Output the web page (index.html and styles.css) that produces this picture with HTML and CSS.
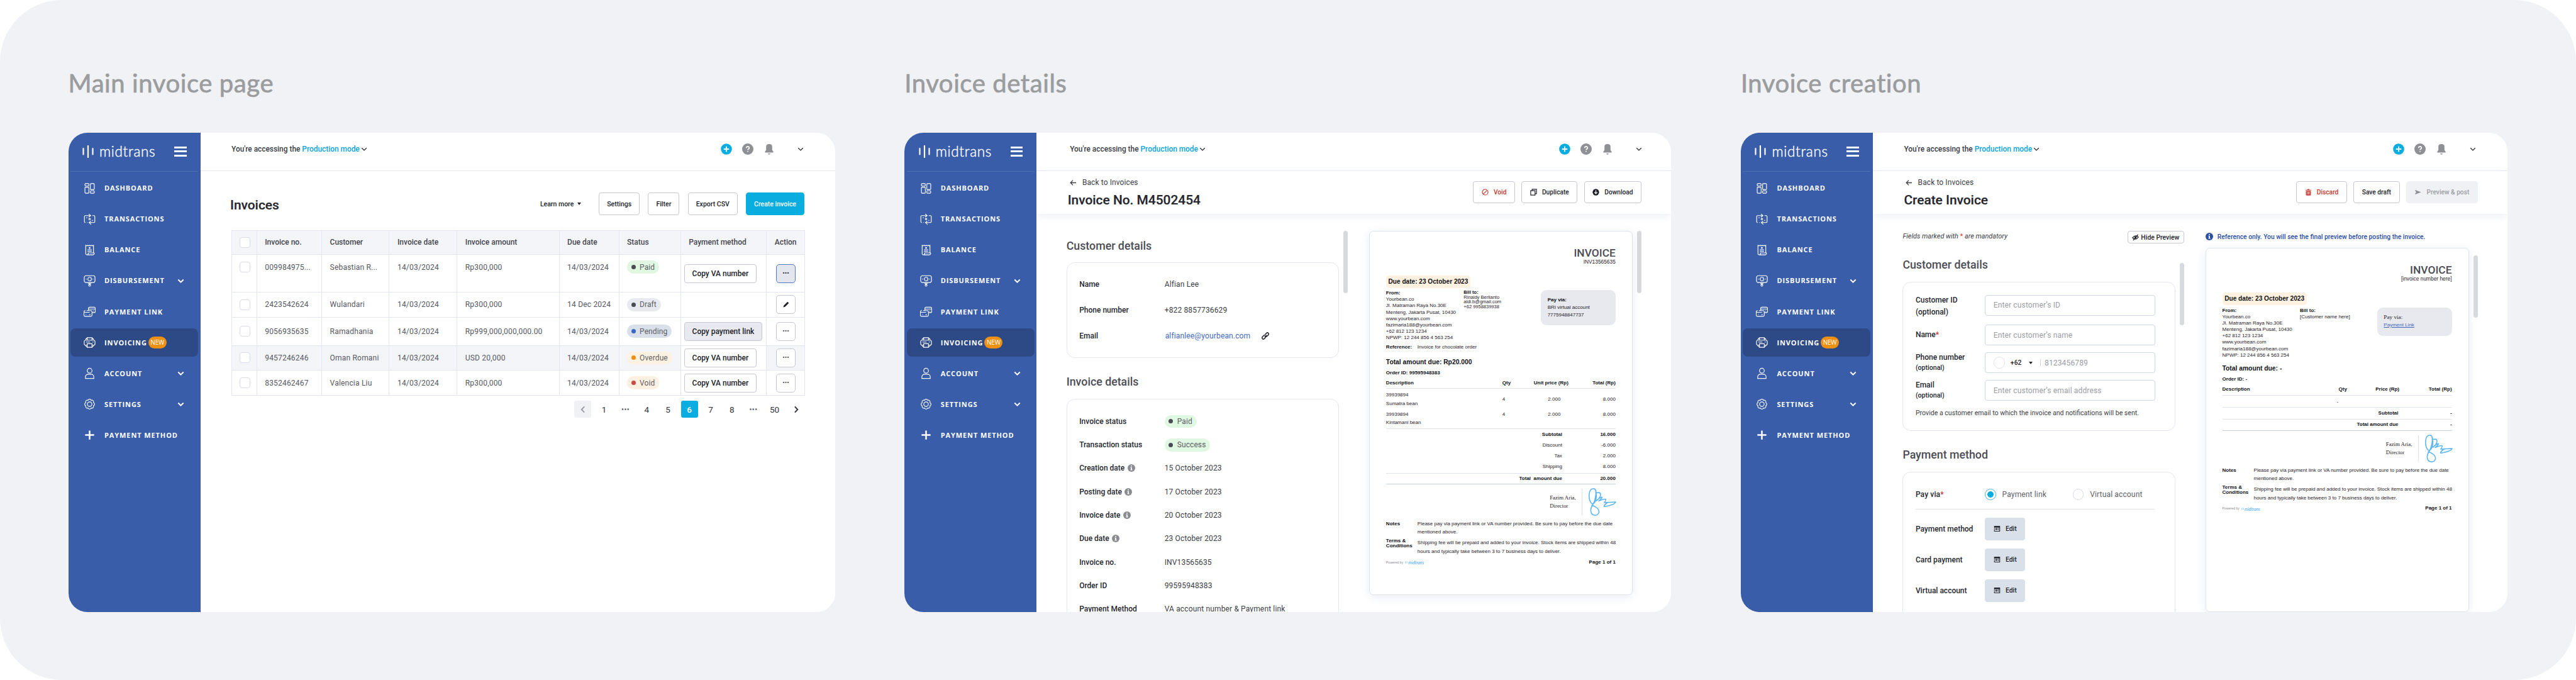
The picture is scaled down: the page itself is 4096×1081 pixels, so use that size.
FILE: index.html
```html
<!DOCTYPE html>
<html lang="en">
<head>
  <meta charset="UTF-8">
  <meta name="viewport" content="width=device-width, initial-scale=1.0">
  <title>Midtrans Invoicing</title>
  <link rel="stylesheet" href="styles.css">
</head>
<body>
  <!-- Shared icons -->
  <svg class="sprite" width="0" height="0">
    <symbol id="i-dashboard" viewBox="0 0 20 20"><rect x="2.2" y="2" width="6.6" height="4" rx="1.2"/><rect x="2.2" y="8" width="6.6" height="10" rx="1.2"/><rect x="11.2" y="2" width="6.6" height="10" rx="1.2"/><rect x="11.2" y="14" width="6.6" height="4" rx="1.2"/></symbol>
    <symbol id="i-transactions" viewBox="0 0 20 20"><path d="M3 15.5H2.8A1.5 1.5 0 0 1 1.3 14V5.5A1.5 1.5 0 0 1 2.8 4H11M8.5 1.2L11.8 4L8.5 6.5M14.5 4H17.2A1.5 1.5 0 0 1 18.7 5.5V14A1.5 1.5 0 0 1 17.2 15.5H9.5M12 13L9 15.5L12.5 18.8M5.5 15.5H6.5"/><circle cx="10" cy="9.8" r="1.3"/><path d="M4.5 7.5H6M14 12H15.5"/></symbol>
    <symbol id="i-balance" viewBox="0 0 20 20"><path d="M3.5 17V2L5.3 3L7 2L8.7 3L10.3 2L12 3L13.7 2L15.3 3L16.5 2V14.5M3.5 15.5A2.3 2.3 0 0 0 5.8 18H15.5A2.3 2.3 0 0 0 17.5 14.7H7.5V16A1.8 1.8 0 0 1 5.8 18"/><circle cx="10" cy="6.5" r=".9"/><path d="M6.5 9.5H13.5M6.5 12H13.5"/></symbol>
    <symbol id="i-disbursement" viewBox="0 0 20 20"><rect x="1" y="1.3" width="18" height="11.5" rx="3"/><circle cx="10" cy="7" r="3"/><path d="M3.8 7H5M15 7H16.2M10 12.8V15.5M7.5 13.8L10 16L12.5 13.8"/><circle cx="10" cy="17.3" r="1.6"/></symbol>
    <symbol id="i-link" viewBox="0 0 20 20"><path d="M8 8V4.5A2 2 0 0 1 10 2.5H17.5A2 2 0 0 1 19.5 4.5V9.5A2 2 0 0 1 17.5 11.5H14.5M8 5.5H19.5M16 8.8H17"/><path d="M5 8.2H12.5A2 2 0 0 1 14 10V15.8A2 2 0 0 1 12 17.8H2.5A2 2 0 0 1 .5 15.8V10.2A2 2 0 0 1 2.5 8.2H3M.5 11H10M3.5 14.5H4.5M9 15H11.5"/></symbol>
    <symbol id="i-invoicing" viewBox="0 0 20 20"><path d="M6 2H14V6H6ZM3.5 6H16.5A2.5 2.5 0 0 1 19 8.5V12A2.5 2.5 0 0 1 16.5 14.5H14.5M5.5 14.5H3.5A2.5 2.5 0 0 1 1 12V8.5A2.5 2.5 0 0 1 3.5 6M6 12H14V18H6Z"/><path d="M4 9.2H11M14.5 9.2H16.5M3 5A9 9 0 0 1 6 2.5M17 5A9 9 0 0 0 14 2.5M3 15A9 9 0 0 0 6 17.6M17 15A9 9 0 0 1 14 17.6"/></symbol>
    <symbol id="i-account" viewBox="0 0 20 20"><circle cx="10" cy="5.5" r="4"/><path d="M3 18.5V16A4.5 4.5 0 0 1 7.5 11.5H12.5A4.5 4.5 0 0 1 17 16V18.5Z"/></symbol>
    <symbol id="i-settings" viewBox="0 0 20 20"><path d="M16.47 7.32A2.9 2.9 0 0 1 16.47 12.68A2.9 2.9 0 0 1 12.68 16.47A2.9 2.9 0 0 1 7.32 16.47A2.9 2.9 0 0 1 3.53 12.68A2.9 2.9 0 0 1 3.53 7.32A2.9 2.9 0 0 1 7.32 3.53A2.9 2.9 0 0 1 12.68 3.53A2.9 2.9 0 0 1 16.47 7.32Z"/><circle cx="10" cy="10" r="3.8"/></symbol>
    <symbol id="i-plus" viewBox="0 0 20 20"><path stroke-width="2.6" d="M10 2.5V17.5M2.5 10H17.5"/></symbol>
    <symbol id="i-chevron" viewBox="0 0 10 10"><path d="M1.2 3.2L5 6.9L8.8 3.2"/></symbol>
    <symbol id="i-add" viewBox="0 0 18 18"><circle cx="9" cy="9" r="8.8" fill="#0aaddf"/><path d="M9 4.8V13.2M4.8 9H13.2" stroke="#fff" stroke-width="1.8"/></symbol>
    <symbol id="i-help" viewBox="0 0 18 18"><circle cx="9" cy="9" r="9" fill="#8f9095"/><path d="M6.7 7.2A2.3 2.1 0 1 1 9.8 9Q9 9.4 9 10.6M9 12V13.6" fill="none" stroke="#fff" stroke-width="1.6"/></symbol>
    <symbol id="i-bell" viewBox="0 0 14 18"><path d="M2.2 5Q2.2 1 7 1T11.8 5V10.5L13.6 13V14.6H.4V13L2.2 10.5ZM5 16H9Q8.5 17.7 7 17.7T5 16Z" fill="#8f9095"/></symbol>
    <symbol id="i-info" viewBox="0 0 12 12"><circle cx="6" cy="6" r="6" fill="currentColor"/><path d="M5.1 2H6.9V3.6H5.1ZM4.5 4.7H6.9V8.5H7.7V9.6H4.4V8.5H5.2V5.8H4.5Z" fill="#fff"/></symbol>
    <symbol id="i-back" viewBox="0 0 12 12"><path d="M11 6H1.5M5.5 1.8L1.3 6L5.5 10.2" fill="none" stroke="#3c3d45" stroke-width="1.4"/></symbol>
    <symbol id="i-enter" viewBox="0 0 12 12"><path fill="#2b2b33" fill-rule="evenodd" d="M.8 1H11.2V11H.8V8H2V9.7H10V4H2V5H.8Z"/><path d="M.5 6.5H5.5M4 4.7L6 6.5L4 8.3M7 5.5H9.5M7 7.7H9.5" stroke="#2b2b33" stroke-width="1.1" fill="none"/></symbol>
    <symbol id="i-sign" viewBox="0 0 44 44"><path fill="none" stroke="#5cb6f3" stroke-width="1.6" stroke-linecap="round" stroke-linejoin="round" d="M11.5 4Q13 13 11.5 19Q9 26 5 24.5Q0 20 1 9Q2 1 7 1Q12 0 11.5 9Q11 18 7 26C2 32 2 42 9 43C16 44 19 37 14 32Q9 28 5 27M12 7.500Q19 6 19 10Q19 15 12.5 20Q21 12 21.5 15Q19 18 16 20.5Q23 17 27 17.500Q28 19 25 23L43 22Q42 25 35 27Q27 29.5 24.5 29Q25 26 31 22.5"/></symbol>
    <symbol id="i-logo" viewBox="0 0 18 20"><path d="M1.500 5V14.500M9 1V19M16.500 5V14.500" stroke="currentColor" stroke-width="2.2" stroke-linecap="round"/></symbol>
  </svg>

  <main class="stage">

    <!-- Main invoice page -->
    <section class="board">
      <h2 class="board-title">Main invoice page</h2>
      <div class="panel">
        <nav class="sidebar">
          <div class="brand"><svg class="brand-mark"><use href="#i-logo"/></svg><span class="brand-name">midtrans</span><span class="burger"></span></div>
          <ul class="menu">
            <li><svg><use href="#i-dashboard"/></svg>DASHBOARD</li>
            <li><svg><use href="#i-transactions"/></svg>TRANSACTIONS</li>
            <li><svg><use href="#i-balance"/></svg>BALANCE</li>
            <li><svg><use href="#i-disbursement"/></svg>DISBURSEMENT<svg class="caret"><use href="#i-chevron"/></svg></li>
            <li><svg><use href="#i-link"/></svg>PAYMENT LINK</li>
            <li class="active"><svg><use href="#i-invoicing"/></svg>INVOICING<span class="new">NEW</span></li>
            <li><svg><use href="#i-account"/></svg>ACCOUNT<svg class="caret"><use href="#i-chevron"/></svg></li>
            <li><svg><use href="#i-settings"/></svg>SETTINGS<svg class="caret"><use href="#i-chevron"/></svg></li>
            <li><svg><use href="#i-plus"/></svg>PAYMENT METHOD</li>
          </ul>
        </nav>
        <div class="content">
          <header class="topbar">
            <span>You're accessing the <b>Production mode</b></span><svg class="chev"><use href="#i-chevron"/></svg>
            <div class="tools"><svg><use href="#i-add"/></svg><svg><use href="#i-help"/></svg><svg class="bell"><use href="#i-bell"/></svg><svg class="chev"><use href="#i-chevron"/></svg></div>
          </header>
          <div class="list-head">
            <h1>Invoices</h1>
            <span class="learn">Learn more <i class="tri"></i></span>
            <button class="btn">Settings</button>
            <button class="btn">Filter</button>
            <button class="btn">Export CSV</button>
            <button class="btn primary">Create invoice</button>
          </div>
          <table class="invoices">
            <colgroup><col class="c1"><col class="c2"><col class="c3"><col class="c4"><col class="c5"><col class="c6"><col class="c7"><col class="c8"><col class="c9"></colgroup>
            <tr class="r0"><th><i class="check"></i></th><th>Invoice no.</th><th>Customer</th><th>Invoice date</th><th>Invoice amount</th><th>Due date</th><th>Status</th><th>Payment method</th><th>Action</th></tr>
            <tr class="r1"><td><i class="check"></i></td><td>009984975...</td><td>Sebastian R...</td><td>14/03/2024</td><td>Rp300,000</td><td>14/03/2024</td><td><span class="tag paid">Paid</span></td><td class="act"><button class="copy">Copy VA number</button></td><td class="act"><button class="more on">•••</button></td></tr>
            <tr class="r2"><td><i class="check"></i></td><td>2423542624</td><td>Wulandari</td><td>14/03/2024</td><td>Rp300,000</td><td>14 Dec 2024</td><td><span class="tag draft">Draft</span></td><td class="act"></td><td class="act"><button class="more"><svg class="pencil" viewBox="0 0 12 12"><path d="M1.5 10.5L2.2 7.8L8.3 1.7L10.3 3.7L4.2 9.8Z" fill="#1f1f26"/></svg></button></td></tr>
            <tr class="r3"><td><i class="check"></i></td><td>9056935635</td><td>Ramadhania</td><td>14/03/2024</td><td>Rp999,000,000,000.00</td><td>14/03/2024</td><td><span class="tag pending">Pending</span></td><td class="act"><button class="copy on">Copy payment link</button></td><td class="act"><button class="more">•••</button></td></tr>
            <tr class="r4"><td><i class="check"></i></td><td>9457246246</td><td>Oman Romani</td><td>14/03/2024</td><td>USD 20,000</td><td>14/03/2024</td><td><span class="tag overdue">Overdue</span></td><td class="act"><button class="copy">Copy VA number</button></td><td class="act"><button class="more">•••</button></td></tr>
            <tr class="r5"><td><i class="check"></i></td><td>8352462467</td><td>Valencia Liu</td><td>14/03/2024</td><td>Rp300,000</td><td>14/03/2024</td><td><span class="tag void">Void</span></td><td class="act"><button class="copy">Copy VA number</button></td><td class="act"><button class="more">•••</button></td></tr>
          </table>
          <div class="pager">
            <span class="prev"><svg><use href="#i-chevron"/></svg></span><span>1</span><span class="dots">•••</span><span>4</span><span>5</span><span class="current">6</span><span>7</span><span>8</span><span class="dots">•••</span><span>50</span><span class="next"><svg><use href="#i-chevron"/></svg></span>
          </div>
        </div>
      </div>
    </section>

    <!-- Invoice details -->
    <section class="board">
      <h2 class="board-title">Invoice details</h2>
      <div class="panel details">
        <nav class="sidebar">
          <div class="brand"><svg class="brand-mark"><use href="#i-logo"/></svg><span class="brand-name">midtrans</span><span class="burger"></span></div>
          <ul class="menu">
            <li><svg><use href="#i-dashboard"/></svg>DASHBOARD</li>
            <li><svg><use href="#i-transactions"/></svg>TRANSACTIONS</li>
            <li><svg><use href="#i-balance"/></svg>BALANCE</li>
            <li><svg><use href="#i-disbursement"/></svg>DISBURSEMENT<svg class="caret"><use href="#i-chevron"/></svg></li>
            <li><svg><use href="#i-link"/></svg>PAYMENT LINK</li>
            <li class="active"><svg><use href="#i-invoicing"/></svg>INVOICING<span class="new">NEW</span></li>
            <li><svg><use href="#i-account"/></svg>ACCOUNT<svg class="caret"><use href="#i-chevron"/></svg></li>
            <li><svg><use href="#i-settings"/></svg>SETTINGS<svg class="caret"><use href="#i-chevron"/></svg></li>
            <li><svg><use href="#i-plus"/></svg>PAYMENT METHOD</li>
          </ul>
        </nav>
        <div class="content">
          <header class="topbar">
            <span>You're accessing the <b>Production mode</b></span><svg class="chev"><use href="#i-chevron"/></svg>
            <div class="tools"><svg><use href="#i-add"/></svg><svg><use href="#i-help"/></svg><svg class="bell"><use href="#i-bell"/></svg><svg class="chev"><use href="#i-chevron"/></svg></div>
          </header>
          <div class="subhead">
            <div class="subhead-text">
              <a class="back"><svg><use href="#i-back"/></svg>Back to Invoices</a>
              <h1>Invoice No. M4502454</h1>
            </div>
            <button class="btn red"><svg viewBox="0 0 12 12"><circle cx="6" cy="6" r="4.9" fill="none" stroke="#c9372c" stroke-width="1.3"/><path d="M2.8 9.2L9.2 2.8" stroke="#c9372c" stroke-width="1.3"/></svg>Void</button>
            <button class="btn"><svg viewBox="0 0 12 12"><path d="M3.5 3V1H11V8.5H9M1 3.5H8.5V11H1Z" fill="none" stroke="#23242b" stroke-width="1.3"/></svg>Duplicate</button>
            <button class="btn"><svg viewBox="0 0 12 12"><circle cx="6" cy="6" r="5.6" fill="#1f2027"/><path d="M6 2.8V8.6M3.5 6.2L6 8.7L8.5 6.2" fill="none" stroke="#fff" stroke-width="1.3"/></svg>Download</button>
          </div>
          <div class="split">
            <div class="form">
              <h3>Customer details</h3>
              <dl class="card customer">
                <dt>Name</dt><dd>Alfian Lee</dd>
                <dt>Phone number</dt><dd>+822 8857736629</dd>
                <dt>Email</dt><dd><a class="mail">alfianlee@yourbean.com</a><svg class="chain" viewBox="0 0 12 12"><path d="M5 7.6L7.6 5M5.6 4.2L7.7 2A1.8 1.8 0 0 1 10.2 4.5L8 6.7A1.8 1.8 0 0 1 6.4 7.1M6.4 7.9L4.3 10A1.8 1.8 0 0 1 1.8 7.5L4 5.3A1.8 1.8 0 0 1 5.6 4.9" fill="none" stroke="#1f2027" stroke-width="1.3"/></svg></dd>
              </dl>
              <h3>Invoice details</h3>
              <dl class="card meta">
                <dt>Invoice status</dt><dd><span class="tag paid">Paid</span></dd>
                <dt>Transaction status</dt><dd><span class="tag paid">Success</span></dd>
                <dt>Creation date<svg><use href="#i-info"/></svg></dt><dd>15 October 2023</dd>
                <dt>Posting date<svg><use href="#i-info"/></svg></dt><dd>17 October 2023</dd>
                <dt>Invoice date<svg><use href="#i-info"/></svg></dt><dd>20 October 2023</dd>
                <dt>Due date<svg><use href="#i-info"/></svg></dt><dd>23 October 2023</dd>
                <dt>Invoice no.</dt><dd>INV13565635</dd>
                <dt>Order ID</dt><dd>99595948383</dd>
                <dt>Payment Method</dt><dd>VA account number &amp; Payment link</dd>
                <dt></dt><dd></dd>
              </dl>
            </div>
            <i class="thumb"></i>
            <article class="paper">
              <div class="p-title">INVOICE</div>
              <div class="p-no">INV13565635</div>
              <div class="p-due">Due date: 23 October 2023</div>
              <div class="p-parties">
                <div class="p-from"><b>From:</b><br>Yourbean.co<br>Jl. Matraman Raya No.30E<br>Menteng, Jakarta Pusat, 10430<br>www.yourbean.com<br>fazimaria188@yourbean.com<br>+62 812 123 1234<br>NPWP: 12 244 856 4 563 254</div>
                <div class="p-bill tight"><b>Bill to:</b><br>Rinaldy Berlianto<br>aldi.b@gmail.com<br>+62 9958839938</div>
                <div class="p-pay"><b>Pay via:</b><br>BRI virtual account<br>7775948847737</div>
              </div>
              <div class="p-ref"><b>Reference:</b><span>Invoice for chocolate order</span></div>
              <div class="p-total">Total amount due: Rp20.000</div>
              <div class="p-order">Order ID: 99595948383</div>
              <div class="p-row head"><b>Description</b><b>Qty</b><b>Unit price (Rp)</b><b>Total (Rp)</b></div>
              <div class="p-items">
                <div class="p-row mid"><span>39939894<br>Sumatra bean</span><span>4</span><span>2.000</span><span>8.000</span></div>
                <div class="p-row"><span>39939894<br>Kintamani bean</span><span>4</span><span>2.000</span><span>8.000</span></div>
              </div>
              <div class="p-sums">
                <b>Subtotal</b><b>16.000</b>
                <span>Discount</span><span>-6.000</span>
                <span>Tax</span><span>2.000</span>
                <span>Shipping</span><span>8.000</span>
              </div>
              <div class="p-sums grand"><b>Total&nbsp; amount due</b><b>20.000</b></div>
              <div class="p-sign"><span>Fazim Aria,<br>Director</span><svg><use href="#i-sign"/></svg></div>
              <div class="p-notes">
                <b>Notes</b><span>Please pay via payment link or VA number provided. Be sure to pay before the due date<br>mentioned above.</span>
                <b>Terms &amp;<br>Conditions</b><span>Shipping fee will be prepaid and added to your invoice. Stock items are shipped within 48<br>hours and typically take between 3 to 7 business days to deliver.</span>
              </div>
              <div class="p-foot"><small>Powered by</small><svg><use href="#i-logo"/></svg><em>midtrans</em><b>Page 1 of 1</b></div>
            </article>
            <i class="thumb"></i>
          </div>
        </div>
      </div>
    </section>

    <!-- Invoice creation -->
    <section class="board">
      <h2 class="board-title">Invoice creation</h2>
      <div class="panel create">
        <nav class="sidebar">
          <div class="brand"><svg class="brand-mark"><use href="#i-logo"/></svg><span class="brand-name">midtrans</span><span class="burger"></span></div>
          <ul class="menu">
            <li><svg><use href="#i-dashboard"/></svg>DASHBOARD</li>
            <li><svg><use href="#i-transactions"/></svg>TRANSACTIONS</li>
            <li><svg><use href="#i-balance"/></svg>BALANCE</li>
            <li><svg><use href="#i-disbursement"/></svg>DISBURSEMENT<svg class="caret"><use href="#i-chevron"/></svg></li>
            <li><svg><use href="#i-link"/></svg>PAYMENT LINK</li>
            <li class="active"><svg><use href="#i-invoicing"/></svg>INVOICING<span class="new">NEW</span></li>
            <li><svg><use href="#i-account"/></svg>ACCOUNT<svg class="caret"><use href="#i-chevron"/></svg></li>
            <li><svg><use href="#i-settings"/></svg>SETTINGS<svg class="caret"><use href="#i-chevron"/></svg></li>
            <li><svg><use href="#i-plus"/></svg>PAYMENT METHOD</li>
          </ul>
        </nav>
        <div class="content">
          <header class="topbar">
            <span>You're accessing the <b>Production mode</b></span><svg class="chev"><use href="#i-chevron"/></svg>
            <div class="tools"><svg><use href="#i-add"/></svg><svg><use href="#i-help"/></svg><svg class="bell"><use href="#i-bell"/></svg><svg class="chev"><use href="#i-chevron"/></svg></div>
          </header>
          <div class="subhead">
            <div class="subhead-text">
              <a class="back"><svg><use href="#i-back"/></svg>Back to Invoices</a>
              <h1>Create Invoice</h1>
            </div>
            <button class="btn red"><svg viewBox="0 0 12 12"><path d="M1 1.8H4L4.5 .6H7.5L8 1.8H11V3H1ZM1.7 3.7H10.3V10.4Q10.3 11.6 9.2 11.6H2.8Q1.7 11.6 1.7 10.4Z" fill="#c9453c"/><path d="M4.3 5.5V9.5M6 5.5V9.5M7.7 5.5V9.5" stroke="#fff" stroke-width=".7"/></svg>Discard</button>
            <button class="btn">Save draft</button>
            <button class="btn off"><svg viewBox="0 0 12 12"><path d="M.8 1.8L11.5 6L.8 10.2L3 6Z" fill="#8e9096"/></svg>Preview &amp; post</button>
          </div>
          <div class="split">
            <div class="form">
              <div class="form-top"><em>Fields marked with <i class="req">*</i> are mandatory</em><button class="hide"><svg viewBox="0 0 12 12"><path d="M1 6.5Q6 .5 11 5.5Q6 11.5 1 6.5ZM2 11L10.5 1" fill="none" stroke="#1f2027" stroke-width="1.4"/><circle cx="6" cy="6" r="1.8" fill="#1f2027"/></svg>Hide Preview</button></div>
              <h3>Customer details</h3>
              <div class="card fields">
                <label class="wide">Customer ID<br>(optional)</label><div class="input">Enter customer’s ID</div>
                <label>Name<i class="req">*</i></label><div class="input">Enter customer’s name</div>
                <label>Phone number<small>(optional)</small></label><div class="input phone"><i class="flag"></i><b>+62</b><i class="tri"></i><i class="bar"></i>8123456789</div>
                <label>Email<small>(optional)</small></label><div class="input">Enter customer’s email address</div>
                <p>Provide a customer email to which the invoice and notifications will be sent.</p>
              </div>
              <h3>Payment method</h3>
              <div class="card methods">
                <div class="via"><label>Pay via<i class="req">*</i></label><i class="radio on"></i><span>Payment link</span><i class="radio"></i><span>Virtual account</span></div>
                <div class="method"><label>Payment method</label><button class="edit"><svg><use href="#i-enter"/></svg>Edit</button></div>
                <div class="method"><label>Card payment</label><button class="edit"><svg><use href="#i-enter"/></svg>Edit</button></div>
                <div class="method"><label>Virtual account</label><button class="edit"><svg><use href="#i-enter"/></svg>Edit</button></div>
              </div>
            </div>
            <i class="thumb"></i>
            <div class="preview">
              <p class="hint"><svg><use href="#i-info"/></svg>Reference only. You will see the final preview before posting the invoice.</p>
              <article class="paper blank">
                <div class="p-title">INVOICE</div>
                <div class="p-no">[invoice number here]</div>
                <div class="p-due">Due date: 23 October 2023</div>
                <div class="p-parties">
                  <div class="p-from"><b>From:</b><br>Yourbean.co<br>Jl. Matraman Raya No.30E<br>Menteng, Jakarta Pusat, 10430<br>+62 812 123 1234<br>www.yourbean.com<br>fazimaria188@yourbean.com<br>NPWP: 12 244 856 4 563 254</div>
                  <div class="p-bill"><b>Bill to:</b><br>[Customer name here]</div>
                  <div class="p-pay"><span class="serif">Pay via:</span><br><a>Payment Link</a></div>
                </div>
                <div class="p-total">Total amount due: -</div>
                <div class="p-order">Order ID: -</div>
                <div class="p-row head"><b>Description</b><b>Qty</b><b>Price (Rp)</b><b>Total (Rp)</b></div>
                <div class="p-empty">-</div>
                <div class="p-sums"><b>Subtotal</b><b>-</b></div>
                <div class="p-sums grand"><b>Total amount due</b><b>-</b></div>
                <div class="p-sign"><span>Fazim Aria,<br>Director</span><svg><use href="#i-sign"/></svg></div>
                <div class="p-notes">
                  <b>Notes</b><span>Please pay via payment link or VA number provided. Be sure to pay before the due date<br>mentioned above.</span>
                  <b>Terms &amp;<br>Conditions</b><span>Shipping fee will be prepaid and added to your invoice. Stock items are shipped within 48<br>hours and typically take between 3 to 7 business days to deliver.</span>
                </div>
                <div class="p-foot"><small>Powered by</small><svg><use href="#i-logo"/></svg><em>midtrans</em><b>Page 1 of 1</b></div>
              </article>
            </div>
            <i class="thumb"></i>
          </div>
        </div>
      </div>
    </section>

  </main>
</body>
</html>
```

FILE: styles.css
```css
* {
  box-sizing: border-box;
}

body {
  margin: 0;
  background: #fff;
  font-family: Roboto, sans-serif;
  font-size: 12px;
  color: #3c3d45;
}

h1, h2, h3, p, ul, dl, dd {
  margin: 0;
  padding: 0;
}

button {
  font-family: inherit;
  padding: 0;
}

.sprite {
  display: block;
}

.stage {
  display: flex;
  gap: 110.7px;
  width: 4096px;
  height: 1081px;
  padding-left: 108.5px;
  background: #f0f2f6;
  border-radius: 98px;
  overflow: hidden;
}

.board {
  flex: none;
  width: 1219px;
}

.board-title {
  height: 211px;
  padding: 107px 0 0 0;
  font: 400 40px/50px Lato, sans-serif;
  letter-spacing: 0.6px;
  color: #9b9c9e;
  -webkit-text-stroke: 0.7px #9b9c9e;
}

.panel {
  display: grid;
  grid-template-columns: 210px 1fr;
  height: 762px;
  border-radius: 30px;
  background: #fff;
  overflow: hidden;
}

/* sidebar */
.sidebar {
  padding: 0 3.5px;
  background: #3a5daa;
  color: #fff;
}

.brand {
  display: flex;
  align-items: center;
  height: 62px;
  padding: 0 18.5px 2px 19px;
  border-bottom: 1px solid #4f6fb5;
}

.brand-mark {
  width: 18px;
  height: 20px;
}

.brand-name {
  margin-left: 9px;
  font: 300 22.5px/24px Lato, sans-serif;
  letter-spacing: 0.7px;
  -webkit-text-stroke: 0.4px #fff;
}

.burger {
  width: 19.5px;
  height: 16px;
  margin-left: auto;
  border-top: 3px solid #fff;
  border-bottom: 3px solid #fff;
  background: linear-gradient(#fff, #fff) 0 50% / 100% 3px no-repeat;
}

.menu {
  display: grid;
  gap: 4.1px;
  padding-top: 3.7px;
  list-style: none;
}

.menu li {
  display: flex;
  align-items: center;
  height: 45px;
  padding: 0 22px 0 21px;
  border-radius: 8px;
  font: 700 11px/16px "Open Sans", sans-serif;
  letter-spacing: 0.9px;
}

.menu li.active {
  background: #2d4a86;
}

.menu svg {
  width: 19px;
  height: 19px;
  margin-right: 14px;
  fill: none;
  stroke: #fff;
  stroke-width: 1.2;
}

.menu .caret {
  width: 11px;
  height: 11px;
  margin: 0 0 0 auto;
  stroke-width: 1.8;
}

.new {
  margin-left: 2px;
  padding: 0 3.5px;
  border-radius: 10px;
  background: #ee9012;
  font: 400 10px/19px "Open Sans", sans-serif;
  letter-spacing: -0.2px;
}

/* top bar */
.content {
  display: flex;
  flex-direction: column;
  min-width: 0;
  overflow: hidden;
}

.topbar {
  display: flex;
  flex: none;
  align-items: center;
  height: 61px;
  padding: 0 49.5px 8px 49.5px;
  border-bottom: 1px solid #e4e6ee;
  font-size: 11.9px;
  font-weight: 500;
}

.details .topbar {
  padding-left: 53px;
  padding-right: 46px;
}

.topbar b {
  font-weight: 500;
  color: #0aa5dc;
}

.chev {
  width: 10px;
  height: 10px;
  margin-left: 2px;
  fill: none;
  stroke: #23242b;
  stroke-width: 1.2;
}

.tools {
  display: flex;
  align-items: center;
  margin-left: auto;
}

.tools svg {
  width: 18px;
  height: 18px;
  margin-right: 16px;
}

.tools .bell {
  width: 14px;
  margin: 0 38px 0 2px;
}

.tools .chev {
  width: 10px;
  height: 10px;
  margin: 0;
}

/* invoice list */
.list-head {
  display: flex;
  align-items: center;
  gap: 13.3px;
  padding: 34px 48.5px 0 47.5px;
}

h1 {
  font-size: 20.9px;
  line-height: 24px;
  font-weight: 500;
  color: #26272e;
  -webkit-text-stroke: 0.2px #26272e;
}

.list-head h1 {
  margin-right: auto;
  padding-top: 4px;
}

.learn {
  margin-right: 15px;
  font-size: 10.5px;
  font-weight: 500;
  color: #23242b;
}

.tri {
  display: inline-block;
  margin: 0 0 2px 3px;
  border: 3px solid transparent;
  border-top: 4px solid #23242b;
  border-bottom: 0;
}

.btn {
  display: flex;
  align-items: center;
  height: 36px;
  padding: 0 12px;
  border: 1.5px solid #c5c8d1;
  border-radius: 4px;
  background: #fff;
  font-size: 10.5px;
  font-weight: 500;
  white-space: nowrap;
  color: #23242b;
}

.btn.primary {
  border-color: #0aaddf;
  background: #0aaddf;
  color: #fff;
}

.btn.red {
  color: #c9372c;
}

.btn.off {
  border-color: #f0f1f5;
  background: #f0f1f5;
  color: #9b9da3;
}

.btn svg {
  width: 11px;
  height: 11px;
  margin-right: 8px;
}

.invoices {
  width: 912px;
  margin: 23.5px 0 0 49px;
  border-collapse: collapse;
  table-layout: fixed;
}

.invoices .c1 { width: 40.2px; }
.invoices .c2 { width: 103.4px; }
.invoices .c3 { width: 107.4px; }
.invoices .c4 { width: 107.8px; }
.invoices .c5 { width: 162.3px; }
.invoices .c6 { width: 95px; }
.invoices .c7 { width: 98.2px; }
.invoices .c8 { width: 136.5px; }
.invoices .c9 { width: 61.2px; }

.invoices th,
.invoices td {
  padding: 0 0 0 12.5px;
  border: 1px solid #e4e6ef;
  text-align: left;
  white-space: nowrap;
  letter-spacing: 0.2px;
  color: #56575f;
}

.invoices th {
  background: #f4f5f9;
  font-weight: 500;
  letter-spacing: 0;
  color: #45464e;
}

.r0 { height: 38.6px; }
.r1 { height: 60px; }
.r2 { height: 39.7px; }
.r3 { height: 45px; }
.r4 { height: 39.3px; }
.r5 { height: 40px; }

.r1 td {
  padding-bottom: 20px;
}

.invoices td.act {
  padding: 0 0 0 5px;
}

.invoices td.act:last-child {
  padding-left: 15px;
}

.invoices .r4 td {
  background: #f4f5f9;
}

.invoices .r4 td:nth-child(8) {
  background: #fff;
}

.check {
  display: block;
  width: 17px;
  height: 17px;
  margin-left: -0.5px;
  border: 1.5px solid #d9dce6;
  border-radius: 4px;
  background: #fff;
}

.tag {
  display: inline-flex;
  align-items: center;
  height: 20.7px;
  padding: 0 7px 0 6.5px;
  border-radius: 11px;
  letter-spacing: 0.1px;
  color: #5d5e66;
}

.tag::before {
  content: "";
  width: 7px;
  height: 7px;
  margin-right: 6.5px;
  border-radius: 50%;
  background: #4a4b53;
}

.tag.paid { background: #e0f7e1; }
.tag.draft { background: #e8eaf0; }
.tag.pending { background: #d9e0ea; }
.tag.pending::before { background: #3a66c4; }
.tag.overdue { background: #fff2e0; }
.tag.overdue::before { background: #ee9012; }
.tag.void { background: #fdf0e0; }
.tag.void::before { background: #c94a45; }

.copy {
  display: block;
  height: 30px;
  padding: 0 11.8px;
  border: 1.5px solid #c5c8d1;
  border-radius: 4px;
  background: #fff;
  font-size: 12px;
  font-weight: 500;
  color: #23242b;
}

.copy.on {
  background: #e8eaf0;
}

.more {
  display: grid;
  place-items: center;
  width: 30.5px;
  height: 30px;
  border: 1.5px solid #c5c8d1;
  border-radius: 5px;
  background: #fff;
  font-size: 10.5px;
  color: #56575f;
}

.more.on {
  border-color: #5678c4;
  background: #e4e6ee;
  color: #33343b;
}

.pencil {
  width: 12px;
  height: 12px;
}

.pager {
  display: flex;
  justify-content: flex-end;
  gap: 6.9px;
  padding: 7.8px 48.5px 0 0;
}

.pager span {
  display: grid;
  place-items: center;
  width: 27px;
  height: 27.5px;
  border-radius: 3px;
  font-size: 13.5px;
  color: #33343b;
}

.pager .current {
  background: #0aaddf;
  color: #fff;
  font-weight: 500;
}

.pager .prev {
  background: #f0f1f5;
  color: #9b9da3;
}

.pager .dots {
  font-size: 13px;
  color: #6d6e76;
}

.pager svg {
  width: 12px;
  height: 12px;
  fill: none;
  stroke: currentColor;
  stroke-width: 1.6;
  transform: rotate(90deg);
}

.pager .next svg {
  transform: rotate(-90deg);
}

/* detail + create header */
.subhead {
  display: flex;
  flex: none;
  gap: 10.3px;
  height: 68px;
  padding: 16px 47px 0 49.5px;
  background: #fff;
  box-shadow: 0 3px 14px #eceef4;
}

.subhead-text {
  margin-right: auto;
  margin-top: -5px;
}

.back {
  display: flex;
  align-items: center;
  height: 14px;
  padding-left: 3.5px;
  letter-spacing: 0.1px;
}

.create .back {
  padding-left: 2.5px;
}

.back svg {
  width: 11px;
  height: 11px;
  margin-right: 8.7px;
}

.subhead h1 {
  margin-top: 9px;
}

.subhead .btn {
  height: 35px;
  padding: 0 12.6px;
  font-size: 10.2px;
}

.split {
  display: flex;
  align-items: flex-start;
  padding: 26.5px 0 0 47.5px;
}

.form {
  width: 433.3px;
}

h3 {
  font-size: 17.8px;
  line-height: 24px;
  font-weight: 500;
  color: #4b4c54;
  padding: 12.5px 0 14px;
}

.card {
  border: 1px solid #e4e6f0;
  border-radius: 13px;
}

dl.card {
  display: grid;
  grid-template-columns: 135.5px 1fr;
  padding-left: 19.5px;
}

dt, dd {
  display: flex;
  align-items: center;
}

dt, label {
  font-weight: 500;
  color: #26272e;
}

dd {
  letter-spacing: 0.15px;
}

dt svg {
  width: 12px;
  height: 12px;
  margin-left: 4.5px;
  color: #8b8c92;
}

.customer {
  height: 152.3px;
  grid-auto-rows: 40.7px;
  align-content: center;
}

.customer + h3 {
  padding-top: 26px;
  padding-bottom: 15px;
}

.mail {
  padding-left: 1px;
  color: #4468c0;
}

.chain {
  width: 14px;
  height: 14px;
  margin-left: 17px;
}

.meta {
  grid-auto-rows: 37.27px;
  padding-top: 16px;
}

.thumb {
  flex: none;
  width: 7.2px;
  height: 99.3px;
  margin-left: 7px;
  border-radius: 4px;
  background: #d8d9dc;
}

/* invoice document */
.paper {
  flex: none;
  width: 418.7px;
  height: 579px;
  margin-left: 34px;
  padding: 24px 26px 0 25.7px;
  border: 1px solid #dfe3ee;
  border-radius: 7px;
  background: #fff;
  box-shadow: 0 3px 16px #e9ecf4;
  font: 8px/10.17px "Liberation Sans", sans-serif;
  color: #1f2027;
}

.paper b {
  color: #101116;
}

.p-title {
  font: 500 17.4px/20px Roboto, sans-serif;
  text-align: right;
  color: #4b4c54;
}

.p-no {
  height: 9px;
  font-size: 8.4px;
  line-height: 9px;
  text-align: right;
}

.p-due {
  width: fit-content;
  height: 20px;
  margin-top: 17px;
  padding: 0 3.7px;
  border-radius: 5px;
  background: #fff1e0;
  font: 700 10.1px/20px "Liberation Sans", sans-serif;
  color: #101116;
}

.p-parties {
  display: grid;
  grid-template-columns: 123.5px 1fr 118.7px;
  align-items: start;
  margin-top: 3.5px;
}

.p-from {
  white-space: nowrap;
}

.p-bill.tight {
  line-height: 7.7px;
  font-size: 7.5px;
}

.p-pay {
  height: 55.7px;
  padding: 9.7px 0 0 10.5px;
  border-radius: 9px;
  background: #e7e9ee;
  line-height: 12px;
}

.p-pay a {
  color: #4468c0;
  text-decoration: underline;
}

.serif {
  font: 9.2px "Liberation Serif", serif;
}

.p-ref {
  display: grid;
  grid-template-columns: 50px 1fr;
  margin-top: 5px;
  line-height: 10px;
}

.p-total {
  margin-top: 11.5px;
  font: 700 10.3px/14px "Liberation Sans", sans-serif;
  color: #101116;
}

.p-order {
  margin: 4.7px 0 6.3px;
  font-weight: 700;
  line-height: 10px;
  color: #101116;
}

.p-row {
  display: grid;
  grid-template-columns: 185px 40px 52.5px 1fr;
  line-height: 13.6px;
}

.p-row > :nth-child(n+3) {
  text-align: right;
}

.p-row.head {
  grid-template-columns: 185px 40px 65px 1fr;
  padding-bottom: 3.3px;
  border-bottom: 1px solid #dfe3ee;
  line-height: 10px;
}

.blank .p-row.head {
  grid-template-columns: 185px 40px 56.5px 1fr;
}

.p-row.mid {
  align-items: center;
}

.p-items {
  display: grid;
  gap: 3.3px;
  padding: 3px 0 2.5px;
  border-bottom: 1px solid #dfe3ee;
}

.p-sums {
  display: grid;
  grid-template-columns: 280px 1fr;
  padding: 1px 0;
  border-bottom: 1px solid #dfe3ee;
  line-height: 16.8px;
  text-align: right;
}

.p-sums.grand {
  padding: 0;
  border-bottom: 1px solid #c6d2e2;
}

.p-sign {
  display: flex;
  justify-content: flex-end;
  height: 41.5px;
  margin: 7px 0;
  font: 8.8px/13.6px "Liberation Serif", serif;
}

.p-sign span {
  width: 52px;
  height: 41.5px;
  padding-top: 7.5px;
  border-right: 1px solid #e0e2ea;
}

.p-sign svg {
  width: 44px;
  height: 44px;
  margin: -1px -1px 0 9.7px;
}

.p-notes {
  display: grid;
  grid-template-columns: 50px 1fr;
  row-gap: 3px;
  line-height: 13.6px;
  white-space: nowrap;
}

.p-notes b:nth-of-type(2) {
  line-height: 8.3px;
}

.p-foot {
  display: flex;
  align-items: center;
  height: 10px;
  margin-top: 5.4px;
}

.p-foot small {
  font-size: 5.2px;
  color: #8b8c92;
}

.p-foot svg {
  width: 4px;
  height: 4px;
  margin: 0 1px 0 3px;
  color: #3fa9e8;
}

.p-foot em {
  font: italic 6.8px Lato, sans-serif;
  color: #3fa9e8;
}

.p-foot b {
  margin-left: auto;
}

/* create form */
.create .split {
  padding-top: 27px;
}

.create .thumb {
  margin-top: 50.5px;
}

.form-top {
  display: flex;
  justify-content: space-between;
  align-items: flex-start;
  height: 42px;
  margin-right: -14px;
  font-size: 10.9px;
  line-height: 18px;
}

.req {
  font-style: normal;
  color: #d0342c;
}

.hide {
  display: flex;
  align-items: center;
  height: 20px;
  padding: 0 6.5px;
  border: 1.5px solid #c5c8d1;
  border-radius: 4px;
  background: #fff;
  font-size: 10.4px;
  font-weight: 500;
  color: #23242b;
}

.hide svg {
  width: 11px;
  height: 11px;
  margin-right: 3px;
}

.create h3 {
  padding: 0 0 15px;
}

.fields {
  display: grid;
  grid-template-columns: 110.3px 270.7px;
  grid-template-rows: 37px 33.7px 33.7px 33.7px 1fr;
  row-gap: 10.3px;
  height: 236.7px;
  padding: 19.5px 0 0 19.5px;
}

.fields label {
  align-self: center;
  line-height: 15.7px;
}

.fields .wide {
  line-height: 18.7px;
}

.fields small {
  display: block;
  font-size: 10.6px;
}

.input {
  display: flex;
  align-items: center;
  height: 33.7px;
  padding-left: 12.5px;
  border: 1px solid #cfd6e4;
  border-radius: 4px;
  letter-spacing: 0.15px;
  color: #9a9ca4;
}

.phone b {
  margin: 0 8.5px;
  font-size: 10.2px;
  font-weight: 500;
  color: #1f2027;
}

.phone .tri {
  margin: 0 12px 0 3px;
}

.flag {
  width: 18.7px;
  height: 18.7px;
  border: 1px solid #e1e4ee;
  border-radius: 50%;
}

.bar {
  width: 1px;
  height: 11px;
  margin-right: 6px;
  background: #cfd2da;
}

.fields p {
  grid-column: 1 / 3;
  font-size: 10.6px;
  line-height: 18px;
  white-space: nowrap;
}

.create .fields + h3 {
  padding-top: 26px;
}

.methods {
  height: 260px;
  padding: 0 31.5px 0 19.5px;
}

.via {
  display: flex;
  align-items: center;
  height: 59px;
  padding-top: 12.5px;
  border-bottom: 1px solid #dfe3ee;
  letter-spacing: 0.15px;
  white-space: nowrap;
  color: #5d5e66;
}

.via label {
  width: 110px;
}

.via span {
  width: 122px;
  padding-left: 10px;
}

.via span:last-child {
  width: auto;
}

.radio {
  flex: none;
  width: 17.7px;
  height: 17.7px;
  border: 1px solid #d5d8e2;
  border-radius: 50%;
}

.radio.on {
  border: 1.3px solid #3fb4e8;
  background: radial-gradient(#0aaddf 4.6px, #fff 5.2px);
}

.method {
  display: flex;
  align-items: center;
  height: 49.1px;
  padding-top: 13px;
}

.method label {
  width: 110.5px;
}

.edit {
  display: flex;
  align-items: center;
  justify-content: center;
  width: 64px;
  height: 36px;
  border: 0;
  border-radius: 4px;
  background: #dae0e9;
  font-size: 10.3px;
  font-weight: 500;
  color: #23242b;
}

.edit svg {
  width: 11px;
  height: 11px;
  margin-right: 8px;
}

.preview {
  width: 418.7px;
  margin-left: 34px;
}

.hint {
  display: flex;
  align-items: center;
  height: 18px;
  margin-bottom: 9px;
  font-size: 10.3px;
  font-weight: 500;
  color: #2c4fa3;
  white-space: nowrap;
}

.hint svg {
  width: 12px;
  height: 12px;
  margin-right: 7px;
}

.preview .paper {
  margin: 0;
}

.create .preview + .thumb {
  margin-top: 38.5px;
}

.blank .p-pay {
  height: 45px;
  padding-top: 10.5px;
}

.blank .p-total {
  margin-top: 9.5px;
}

.p-empty {
  height: 19px;
  padding-left: 182px;
  border-bottom: 1px solid #dfe3ee;
  line-height: 19px;
}
```
